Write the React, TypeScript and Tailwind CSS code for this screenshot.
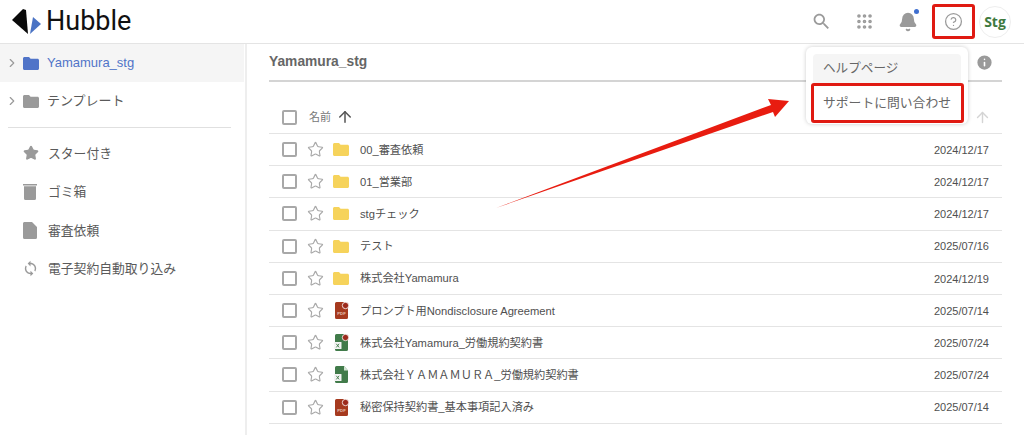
import { Grip, Bell, CircleHelp, Star, ArrowUp, ChevronRight, Info } from 'lucide-react'

type FileKind = 'folder' | 'pdf' | 'xls'

const rows: { name: string; date: string; kind: FileKind; dot?: boolean }[] = [
  { name: '00_審査依頼', date: '2024/12/17', kind: 'folder' },
  { name: '01_営業部', date: '2024/12/17', kind: 'folder' },
  { name: 'stgチェック', date: '2024/12/17', kind: 'folder' },
  { name: 'テスト', date: '2025/07/16', kind: 'folder' },
  { name: '株式会社Yamamura', date: '2024/12/19', kind: 'folder' },
  { name: 'プロンプト用Nondisclosure Agreement', date: '2025/07/14', kind: 'pdf', dot: true },
  { name: '株式会社Yamamura_労働規約契約書', date: '2025/07/24', kind: 'xls', dot: true },
  { name: '株式会社ＹＡＭＡＭＵＲＡ_労働規約契約書', date: '2025/07/24', kind: 'xls' },
  { name: '秘密保持契約書_基本事項記入済み', date: '2025/07/14', kind: 'pdf', dot: true },
]

function FolderShape({ color, className }: { color: string; className: string }) {
  return (
    <svg viewBox="0 0 16 13" className={className}>
      <path d="M1.5 0H6l1.6 1.8h6.9c.8 0 1.5.7 1.5 1.5v8.2c0 .8-.7 1.5-1.5 1.5h-13C.7 13 0 12.3 0 11.5v-10C0 .7.7 0 1.5 0z" fill={color} />
    </svg>
  )
}

function FileIcon({ kind, dot }: { kind: FileKind; dot?: boolean }) {
  if (kind === 'folder') return <FolderShape color="#f6d35b" className="w-4 h-[13px]" />
  const color = kind === 'pdf' ? '#a63a1f' : '#417b4a'
  return (
    <svg viewBox="0 0 15 17" className="w-[15px] h-[17px]">
      <path d="M2.5 0H10l4 4.5V15.5a1.5 1.5 0 0 1-1.5 1.5h-10A1.5 1.5 0 0 1 1 15.5V1.5A1.5 1.5 0 0 1 2.5 0z" fill={color} />
      {kind === 'xls' ? (
        <>
          <rect x="0" y="8" width="7.5" height="7" rx="0.5" fill="#f4f4f4" />
          <path d="M2.3 9.8l2.8 3.6M5.1 9.8l-2.8 3.6" stroke={color} strokeWidth="0.9" />
        </>
      ) : (
        <text x="7.5" y="13" textAnchor="middle" fontSize="4.2" fontWeight="700" fill="#e6c0b2">PDF</text>
      )}
      {dot ? <circle cx="11.5" cy="3.5" r="3.2" fill="#9c2a1c" stroke="#fff" strokeWidth="0.8" /> : <path d="M10 0l4 4.5h-4z" fill="#d5e5d6" />}
    </svg>
  )
}

function Checkbox() {
  return <span className="block w-[15px] h-[15px] border-2 border-[#a8a8a8] rounded-[2px] shrink-0" />
}

function SideItem({ icon, label }: { icon: React.ReactNode; label: string }) {
  return (
    <div className="h-[38.5px] flex items-center pl-[23px] text-[12.8px] text-[#5a5a5a]">
      <span className="w-[25px] flex items-center">{icon}</span>
      {label}
    </div>
  )
}

export default function App() {
  return (
    <div
      className="relative w-[1024px] h-[435px] overflow-hidden bg-white flex flex-col"
      style={{ fontFamily: '"Liberation Sans", "Noto Sans CJK JP", sans-serif' }}
    >
      {/* Header */}
      <header className="h-11 shrink-0 border-b border-[#e4e4e4] flex items-center pl-[12px] pr-[13px]">
        <svg viewBox="12 8 30 26" className="w-[30px] h-[26px]">
          <path d="M12 19L23 8l3 1 2 24z" fill="#0a0a0a" />
          <path d="M33 16l8 7-11 10z" fill="#4a73c4" />
        </svg>
        <span className="ml-[4px] text-[27px] font-normal text-[#111] leading-none" style={{ fontFamily: 'Roboto, sans-serif' }}>Hubble</span>
        <div className="ml-auto flex items-center text-[#9a9a9a]">
          <svg viewBox="0 0 24 24" className="w-[21px] h-[21px]" fill="#9a9a9a">
            <path d="M15.5 14h-.79l-.28-.27C15.41 12.59 16 11.11 16 9.5 16 5.91 13.09 3 9.5 3S3 5.91 3 9.5 5.91 16 9.5 16c1.61 0 3.09-.59 4.23-1.57l.27.28v.79l5 4.99L20.49 19l-4.99-5zm-6 0C7.01 14 5 11.99 5 9.5S7.01 5 9.5 5 14 7.01 14 9.5 11.99 14 9.5 14z" />
          </svg>
          <Grip size={19} strokeWidth={2.6} className="ml-[23px]" />
          <span className="relative ml-[24px]">
            <Bell size={20} fill="#9a9a9a" />
            <span className="absolute -top-[3px] -right-[1px] w-[5px] h-[5px] rounded-full bg-[#3f6fd0]" />
          </span>
          <span className="ml-[14px] w-[43px] h-[35px] border-[3px] border-[#e01a12] rounded-[3px] flex items-center justify-center">
            <CircleHelp size={19} strokeWidth={1.6} />
          </span>
          <span
            className="ml-[4px] w-8 h-8 rounded-full border border-[#eeeeee] flex items-center justify-center text-[14px] font-bold text-[#3f7a3f]"
            style={{ fontFamily: '"Open Sans", sans-serif' }}
          >
            Stg
          </span>
        </div>
      </header>

      <div className="flex-1 flex min-h-0">
        {/* Sidebar */}
        <aside className="w-[247px] shrink-0 border-r-2 border-[#eeeeee] pr-[1px]">
          <div className="h-[38px] bg-[#f5f5f5] flex items-center pl-[5px] text-[13px] text-[#5074c8]">
            <ChevronRight size={14} className="text-[#9a9a9a]" />
            <FolderShape color="#5074c8" className="w-4 h-[13px] ml-[4px] mr-2" />
            Yamamura_stg
          </div>
          <div className="h-[38px] flex items-center pl-[5px] text-[13px] text-[#5a5a5a]">
            <ChevronRight size={14} className="text-[#9a9a9a]" />
            <FolderShape color="#9a9a9a" className="w-4 h-[13px] ml-[4px] mr-2" />
            テンプレート
          </div>
          <div className="mt-[7px] mb-[6px] ml-2 mr-[13px] border-t border-[#e0e0e0]" />
          <SideItem icon={<Star size={16} fill="#9a9a9a" className="text-[#9a9a9a]" />} label="スター付き" />
          <SideItem
            icon={
              <svg viewBox="0 0 14 17" className="w-[14px] h-[17px]">
                <path d="M0 1h14v1.6H0zM1 3.2h12v12.3a1.5 1.5 0 0 1-1.5 1.5h-9A1.5 1.5 0 0 1 1 15.5z" fill="#9a9a9a" />
              </svg>
            }
            label="ゴミ箱"
          />
          <SideItem
            icon={
              <svg viewBox="0 0 14 17" className="w-[14px] h-[17px]">
                <path d="M1.5 0H9l5 5v10.5a1.5 1.5 0 0 1-1.5 1.5h-11A1.5 1.5 0 0 1 0 15.5v-14C0 .7.7 0 1.5 0z" fill="#9a9a9a" />
              </svg>
            }
            label="審査依頼"
          />
          <SideItem
            icon={
              <svg viewBox="0 0 24 24" className="w-[17px] h-[17px] -ml-[1px]" fill="#9a9a9a">
                <path d="M12 4V1L8 5l4 4V6c3.31 0 6 2.69 6 6 0 1.01-.25 1.97-.7 2.8l1.46 1.46C19.54 15.03 20 13.57 20 12c0-4.42-3.58-8-8-8zm0 14c-3.31 0-6-2.69-6-6 0-1.01.25-1.97.7-2.8L5.24 7.74C4.46 8.97 4 10.43 4 12c0 4.42 3.58 8 8 8v3l4-4-4-4v3z" />
              </svg>
            }
            label="電子契約自動取り込み"
          />
        </aside>

        {/* Main */}
        <main className="flex-1 pl-[22px] pr-[22px] min-w-0">
          <div className="h-[38px] border-b-2 border-[#d4d4d4] flex items-center text-[13.8px] font-bold text-[#666666]">
            Yamamura_stg
            <Info size={19} fill="#9a9a9a" className="ml-auto mr-[8px] text-white" />
          </div>
          <div className="mt-[19px] h-[33px] border-b border-[#e4e4e4] flex items-center pl-[13px] pr-[11px]">
            <Checkbox />
            <span className="ml-[12px] text-[11px] text-[#777777]">名前</span>
            <ArrowUp size={18} strokeWidth={2} className="ml-[5px] text-[#555555]" />
            <ArrowUp size={17} strokeWidth={2} className="ml-auto text-[#d4d4d4]" />
          </div>
          {rows.map((row) => (
            <div key={row.name} className="h-[32.2px] border-b border-[#e4e4e4] flex items-center pl-[13px] pr-[13px]">
              <Checkbox />
              <Star size={17} strokeWidth={1.6} className="ml-[10px] text-[#a8a8a8]" />
              <span className="ml-[9px] w-4 flex justify-center">
                <FileIcon kind={row.kind} dot={row.dot} />
              </span>
              <span className="ml-[11px] text-[11.2px] text-[#4f4f4f] pt-[1px]">{row.name}</span>
              <span className="ml-auto text-[11px] text-[#4f4f4f] pt-[1px]">{row.date}</span>
            </div>
          ))}
        </main>
      </div>

      {/* Help menu */}
      <div className="absolute left-[806px] top-[47px] w-[162px] h-[77px] bg-white rounded-md shadow-[0_0_4px_rgba(0,0,0,0.2)] pt-[7px] px-[7px]">
        <div className="h-[29px] bg-[#f5f5f5] rounded-t flex items-center px-[10px] text-[12.6px] text-[#666666]">ヘルプページ</div>
        <div className="absolute left-[5px] top-[36px] w-[153px] h-[40px] bg-white border-[3px] border-[#e01a12] rounded-[3px] flex items-center pl-[9px] text-[12.8px] text-[#666666]">
          サポートに問い合わせ
        </div>
      </div>

      {/* Annotation arrow */}
      <svg className="absolute left-0 top-0 pointer-events-none" width="1024" height="435">
        <path d="M496 208L771 105L768 99L789 101L775 117L773 112Z" fill="#e81c10" />
      </svg>
    </div>
  )
}
